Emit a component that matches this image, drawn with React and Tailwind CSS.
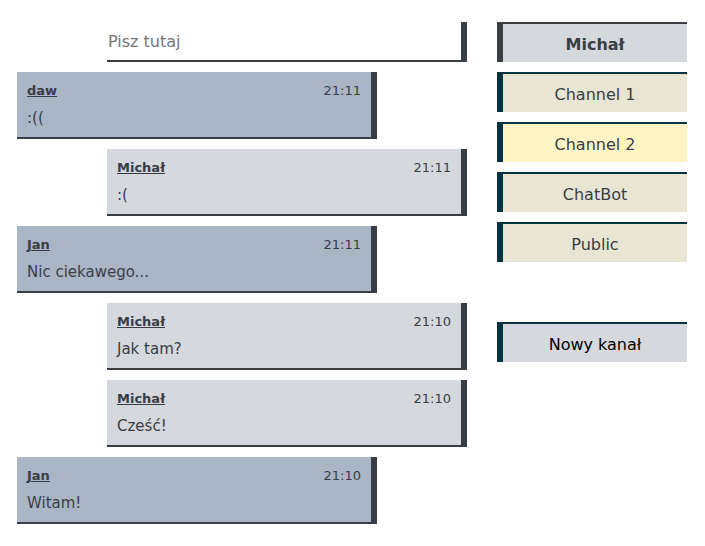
const messages = [
  { author: 'daw', time: '21:11', text: ':((', own: false },
  { author: 'Michał', time: '21:11', text: ':(', own: true },
  { author: 'Jan', time: '21:11', text: 'Nic ciekawego...', own: false },
  { author: 'Michał', time: '21:10', text: 'Jak tam?', own: true },
  { author: 'Michał', time: '21:10', text: 'Cześć!', own: true },
  { author: 'Jan', time: '21:10', text: 'Witam!', own: false },
];

const channels = [
  { name: 'Channel 1', active: false },
  { name: 'Channel 2', active: true },
  { name: 'ChatBot', active: false },
  { name: 'Public', active: false },
];

function Message({ author, time, text, own }) {
  return (
    <li
      className={`w-4/5 border-b-2 border-r-6 border-[#393e46] px-2.5 pt-2.5 pb-2 ${
        own ? 'self-end bg-[#d5d8dd]' : 'self-start bg-[#aab5c6]'
      }`}
    >
      <div className="flex justify-between text-[13px] leading-[18px]">
        <strong className="underline">{author}</strong>
        <time>{time}</time>
      </div>
      <p className="mt-2 text-[15px] leading-[21px]">{text}</p>
    </li>
  );
}

export default function App() {
  return (
    <div className="flex gap-[30px] pt-[22px] pr-[18px] pb-[22px] pl-[17px] font-['DejaVu_Sans',sans-serif] text-[#393e46]">
      <main className="flex min-w-0 flex-1 flex-col gap-2.5">
        <input
          type="text"
          aria-label="Pisz tutaj"
          placeholder="Pisz tutaj"
          className="h-10 w-4/5 self-end border-b-2 border-r-6 border-[#393e46] px-px text-base outline-none placeholder:text-[#757575]"
        />
        <ul className="flex flex-col gap-2.5">
          {messages.map((message, index) => (
            <Message key={index} {...message} />
          ))}
        </ul>
      </main>
      <aside className="flex w-[190px] shrink-0 flex-col gap-2.5">
        <h1 className="flex h-10 items-center justify-center border-t-2 border-l-6 border-[#393e46] bg-[#d5d8dd] pt-1 font-bold">
          Michał
        </h1>
        <nav className="flex flex-col gap-2.5">
          {channels.map(({ name, active }) => (
            <button
              key={name}
              type="button"
              className={`h-10 border-t-2 border-l-6 border-[#003440] pt-1 ${
                active ? 'bg-[#fff4c3]' : 'bg-[#e8e6d3]'
              }`}
            >
              {name}
            </button>
          ))}
        </nav>
        <button
          type="button"
          className="mt-[50px] h-10 border-t-2 border-l-6 border-[#003440] bg-[#d5d8dd] pt-1 text-black"
        >
          Nowy kanał
        </button>
      </aside>
    </div>
  );
}
